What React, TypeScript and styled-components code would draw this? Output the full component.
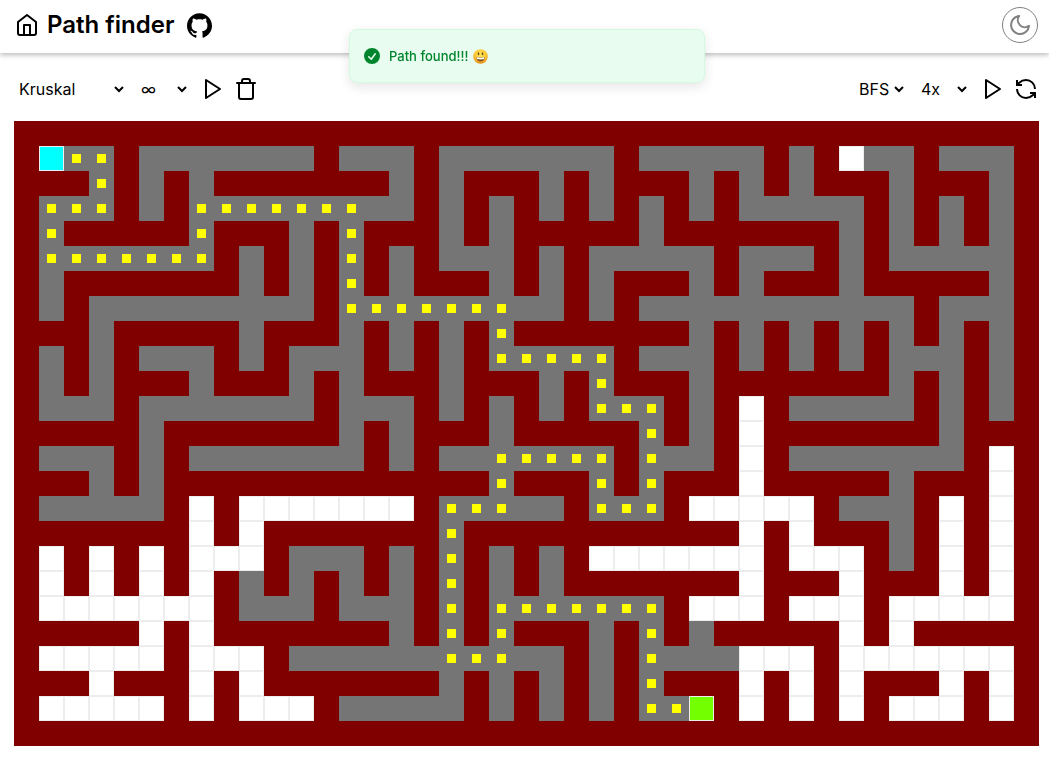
import React from "react";
import styled, { createGlobalStyle, css } from "styled-components";
import { FiHome, FiMoon, FiPlay, FiTrash } from "react-icons/fi";
import { SiGithub } from "react-icons/si";
import { RefreshCcw } from "lucide-react";

const GlobalStyle = createGlobalStyle`
  *, *::before, *::after { box-sizing: border-box; }
  body {
    margin: 0;
    background: #fff;
    color: #000;
    font-family: Inter, "Liberation Sans", sans-serif;
    font-size: 16px;
  }
`;

type CellKind = "wall" | "open" | "visited" | "start" | "end";

/* Corridors of the maze, one line per row; "o" marks cells not yet visited. */
const CORRIDORS = [
  "",
  "1-3 5-11 13-15 17-23 25-29 31 o33 34-35 37-39",
  "3 5 7 15 17 21 23 27 29 31 35 39",
  "1-3 5 7-15 17 19 21 23 25 27 29-33 35 37 39",
  "1 7 11 13 17 19 25 33 35 37 39",
  "1-7 9 11 13 15 17-19 21 23-27 29-31 33 35-39",
  "1 9 11 13 15 19 21 23 27 29 33 39",
  "1 3-11 13-21 23 25-35 37-39",
  "3 9 13 15 17 19 27 29 31 33 35 37 39",
  "1 3 5-7 9 11-13 15 17 19-23 25-27 29 31 33 35-37 39",
  "1 3 7 11 13 17 21 23 27 35 37 39",
  "1-3 5-11 13-15 17 19 21 23-25 27 o29 31-35 37 39",
  "5 13 15 19 25 27 o29 37",
  "1-3 5 7-13 15 17-23 25-27 o29 31-37 o39",
  "3 5 19 23 25 o29 35 o39",
  "1-5 o7 o9-15 17-21 23-25 o27-31 33-35 o37 o39",
  "o7 o9 17 o29 o31 35 o37 o39",
  "o1 o3 o5 o7-9 11-13 15 17 19 21 o23-29 o31-33 35 o37 o39",
  "o1 o3 o5 o7 9 11 13 15 17 19 21 o29 o33 o37 o39",
  "o1-7 9-11 13-15 17 19-25 o27-29 o31-33 o35-39",
  "o5 o7 15 17 19 23 25 27 o33 o35",
  "o1-5 o7-9 11-21 23 25-28 o29-31 o33-39",
  "o3 o7 o9 17 19 21 23 25 o29 o31 o33 o37 o39",
  "o1-5 o7 o9-11 13-17 19 21 23 25-26 27 o29 o31 o33 o35-37 o39",
  "",
];

const COLUMNS = 41;

/* Turning points of the found path as [column, row]. */
const PATH: [number, number][] = [
  [1, 1], [3, 1], [3, 3], [1, 3], [1, 5], [7, 5], [7, 3], [13, 3], [13, 7],
  [19, 7], [19, 9], [23, 9], [23, 11], [25, 11], [25, 15], [23, 15], [23, 13],
  [19, 13], [19, 15], [17, 15], [17, 21], [19, 21], [19, 19], [25, 19],
  [25, 23], [27, 23],
];

const buildMaze = (): CellKind[][] =>
  CORRIDORS.map((line) => {
    const row: CellKind[] = Array(COLUMNS).fill("wall");
    line.split(" ").filter(Boolean).forEach((span) => {
      const kind: CellKind = span.startsWith("o") ? "open" : "visited";
      const [from, to = from] = span.replace("o", "").split("-").map(Number);
      row.fill(kind, from, to + 1);
    });
    return row;
  });

const buildPath = () => {
  const cells = new Set<string>();
  for (let i = 1; i < PATH.length; i++) {
    const [toX, toY] = PATH[i];
    let [x, y] = PATH[i - 1];
    while (x !== toX || y !== toY) {
      cells.add(`${x},${y}`);
      x += Math.sign(toX - x);
      y += Math.sign(toY - y);
    }
  }
  return cells;
};

const maze = buildMaze();
const pathCells = buildPath();
const [startX, startY] = PATH[0];
const [endX, endY] = PATH[PATH.length - 1];
maze[startY][startX] = "start";
maze[endY][endX] = "end";
pathCells.delete(`${startX},${startY}`);

const cellColors: Record<CellKind, string> = {
  wall: "#800000",
  open: "#ffffff",
  visited: "#757575",
  start: "#00ffff",
  end: "#73ff00",
};

const Header = styled.header`
  display: flex;
  align-items: center;
  justify-content: space-between;
  height: 53px;
  padding: 0 11px 3px 15px;
  background: #fff;
  box-shadow: 0 2px 5px rgba(0, 0, 0, 0.27);
`;

const Brand = styled.div`
  display: flex;
  align-items: center;
  gap: 8px;
`;

const IconLink = styled.a`
  display: flex;
  color: inherit;
`;

const Title = styled.h1`
  margin: 0 5px 0 0;
  font-size: 24px;
  line-height: 32px;
  font-weight: 600;
`;

const ThemeButton = styled.button`
  display: flex;
  align-items: center;
  justify-content: center;
  width: 36px;
  height: 36px;
  padding: 0;
  border: 1px solid #808080;
  border-radius: 50%;
  background: none;
  color: #808080;
  cursor: pointer;
`;

const Main = styled.main`
  padding: 24px 10px 0 14px;
`;

const Toolbar = styled.div`
  display: flex;
  justify-content: space-between;
  margin: 0 1px 20px;
`;

const ToolGroup = styled.div`
  display: flex;
  align-items: center;
  gap: 10px;
`;

const ToolButtons = styled.div`
  display: flex;
  gap: 9px;
  padding-left: 1px;
`;

const Select = styled.select<{ $width: number }>`
  width: ${(p) => p.$width}px;
  height: 24px;
  padding: 0;
  border: 0;
  background: none;
  color: inherit;
  font: inherit;
  cursor: pointer;
`;

const IconButton = styled.button`
  display: flex;
  padding: 0;
  border: 0;
  background: none;
  color: inherit;
  cursor: pointer;
`;

const Board = styled.div`
  display: grid;
  grid-template-columns: repeat(${COLUMNS}, 1fr);
`;

const Cell = styled.div<{ $kind: CellKind }>`
  display: flex;
  align-items: center;
  justify-content: center;
  aspect-ratio: 1;
  background: ${(p) => cellColors[p.$kind]};
  ${(p) =>
    p.$kind !== "wall" &&
    p.$kind !== "visited" &&
    css`
      border: 1px solid #ededed;
    `}
`;

const PathDot = styled.span`
  width: 36%;
  height: 36%;
  background: #ffff00;
`;

const ToastLayer = styled.section`
  position: fixed;
  top: 29px;
  left: 15px;
  right: 10px;
  display: flex;
  justify-content: center;
  pointer-events: none;
`;

const Toast = styled.div`
  display: flex;
  align-items: center;
  width: 356px;
  padding: 16px 12px;
  gap: 7px;
  border: 1px solid #d1fae0;
  border-radius: 8px;
  background: #e8fcf0;
  box-shadow: 0 4px 12px rgba(0, 0, 0, 0.1);
  color: #00852c;
  font-size: 13px;
  line-height: 20px;
  font-weight: 500;
`;

const ToastText = styled.div`
  display: flex;
  align-items: center;
  gap: 5px;
`;

const CheckIcon = () => (
  <svg width="20" height="20" viewBox="0 0 20 20" fill="currentColor" aria-hidden="true">
    <path
      fillRule="evenodd"
      clipRule="evenodd"
      d="M10 18a8 8 0 100-16 8 8 0 000 16zm3.857-9.809a.75.75 0 00-1.214-.882l-3.483 4.79-1.88-1.88a.75.75 0 10-1.06 1.061l2.5 2.5a.75.75 0 001.137-.089l4-5.5z"
    />
  </svg>
);

const SmileIcon = () => (
  <svg width="15" height="15" viewBox="0 0 30 30" role="img" aria-label="Smiling face">
    <defs>
      <radialGradient id="face" cx="50%" cy="35%" r="65%">
        <stop offset="0" stopColor="#ffe757" />
        <stop offset="0.6" stopColor="#fcc934" />
        <stop offset="1" stopColor="#e58a1c" />
      </radialGradient>
    </defs>
    <circle cx="15" cy="15" r="14.5" fill="url(#face)" />
    <ellipse cx="11" cy="9.500" rx="1.600" ry="3.200" fill="#6b4512" />
    <ellipse cx="19" cy="9.500" rx="1.600" ry="3.200" fill="#6b4512" />
    <path d="M6 16c5.500 1.400 12.500 1.400 18 0-.4 5.500-4 9-9 9s-8.600-3.500-9-9z" fill="#80501a" />
    <path d="M7 16.500c5 1.200 11 1.200 16 0l-.7 3.500c-4.500 1.200-10 1.200-14.600 0z" fill="#fff" />
  </svg>
);

export default function App() {
  return (
    <>
      <GlobalStyle />
      <Header>
        <Brand>
          <IconLink href="#home" aria-label="Home">
            <FiHome size={24} />
          </IconLink>
          <Title>Path finder</Title>
          <IconLink href="#github" aria-label="GitHub">
            <SiGithub size={25} />
          </IconLink>
        </Brand>
        <ThemeButton type="button" aria-label="Switch to dark theme">
          <FiMoon size={24} />
        </ThemeButton>
      </Header>
      <Main>
        <Toolbar>
          <ToolGroup>
            <Select $width={112} aria-label="Maze algorithm" defaultValue="Kruskal">
              <option>Kruskal</option>
            </Select>
            <Select $width={53} aria-label="Maze speed" defaultValue="∞">
              <option>∞</option>
            </Select>
            <ToolButtons>
              <IconButton type="button" aria-label="Generate maze">
                <FiPlay size={24} />
              </IconButton>
              <IconButton type="button" aria-label="Clear board">
                <FiTrash size={24} />
              </IconButton>
            </ToolButtons>
          </ToolGroup>
          <ToolGroup>
            <Select $width={52} aria-label="Search algorithm" defaultValue="BFS">
              <option>BFS</option>
            </Select>
            <Select $width={53} aria-label="Search speed" defaultValue="4x">
              <option>4x</option>
            </Select>
            <ToolButtons>
              <IconButton type="button" aria-label="Find path">
                <FiPlay size={24} />
              </IconButton>
              <IconButton type="button" aria-label="Reset path">
                <RefreshCcw size={24} strokeLinecap="butt" strokeLinejoin="miter" />
              </IconButton>
            </ToolButtons>
          </ToolGroup>
        </Toolbar>
        <Board>
          {maze.map((row, y) =>
            row.map((kind, x) => (
              <Cell key={`${x},${y}`} $kind={kind}>
                {pathCells.has(`${x},${y}`) && <PathDot />}
              </Cell>
            ))
          )}
        </Board>
      </Main>
      <ToastLayer aria-label="Notifications">
        <Toast role="status">
          <CheckIcon />
          <ToastText>
            Path found!!! <SmileIcon />
          </ToastText>
        </Toast>
      </ToastLayer>
    </>
  );
}
